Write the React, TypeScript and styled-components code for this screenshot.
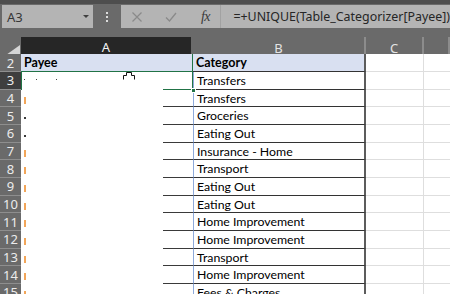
import styled, { createGlobalStyle } from 'styled-components';

const GlobalStyle = createGlobalStyle`
  html, body { margin: 0; padding: 0; background: #fff; overflow: hidden; }
  * { box-sizing: border-box; }
`;

const COLS = '21px 172px 173px 58px 1fr';
const GREEN = '#217346';
const UI_FONT = `"Noto Sans", "Liberation Sans", sans-serif`;
const CELL_FONT = `Lato, "Liberation Sans", sans-serif`;

const Window = styled.div`
  width: 450px;
  height: 294px;
  overflow: hidden;
  display: flex;
  flex-direction: column;
  background: #6a6a6a;
`;

const TopEdge = styled.div`
  flex: none;
  height: 4px;
  background: #4e4e4e;
`;

const FormulaBar = styled.div`
  flex: none;
  height: 33px;
  display: flex;
  align-items: flex-start;
  padding: 1px 0 0 2px;
`;

const NameBox = styled.div`
  width: 91px;
  height: 23px;
  background: #b4b4b4;
  display: flex;
  align-items: center;
  justify-content: space-between;
  padding: 0 4px 0 5px;
  font: 13px ${UI_FONT};
  color: #363636;
`;

const Caret = styled.span`
  width: 0;
  height: 0;
  border-left: 3px solid transparent;
  border-right: 3px solid transparent;
  border-top: 3px solid #404040;
`;

const Grip = styled.div`
  width: 29px;
  height: 23px;
  display: flex;
  flex-direction: column;
  align-items: center;
  justify-content: center;
  gap: 2px;

  span {
    width: 2px;
    height: 2px;
    background: #dcdcdc;
  }
`;

const FormulaBox = styled.div`
  flex: 1;
  height: 23px;
  background: #b4b4b4;
  display: flex;
  align-items: center;
`;

const Buttons = styled.div`
  width: 100px;
  height: 100%;
  display: flex;
  align-items: center;
  gap: 22px;
  padding-left: 10px;
  border-right: 1px solid #a2a2a2;
`;

const IconSlot = styled.span`
  width: 12px;
  height: 12px;
  display: flex;
  align-items: center;
  justify-content: center;
`;

const Fx = styled.span`
  font: italic 14px "Liberation Serif", serif;
  color: #3a3a3a;
  letter-spacing: -0.5px;
  line-height: 1;
`;

const FormulaText = styled.div`
  padding-left: 12px;
  font: 12.4px ${UI_FONT};
  color: #262626;
  white-space: nowrap;
`;

const HeaderRow = styled.div`
  flex: none;
  height: 17px;
  display: grid;
  grid-template-columns: ${COLS};
`;

const Corner = styled.div`
  display: flex;
  align-items: flex-end;
  justify-content: flex-end;
  padding: 0 1px 3px 0;
`;

const ColHead = styled.div<{ $active?: boolean }>`
  display: flex;
  align-items: center;
  justify-content: center;
  font: 13px ${UI_FONT};
  color: ${p => (p.$active ? '#f2f2f2' : '#e4e4e4')};
  background: ${p => (p.$active ? '#262626' : '#6a6a6a')};
  border-right: 2px solid ${p => (p.$active ? '#6a6a6a' : '#8c8c8c')};
  border-bottom: ${p => (p.$active ? `2px solid ${GREEN}` : '1px solid #8c8c8c')};
  padding-top: 1px;
`;

const Sheet = styled.div`
  flex: 1;
  background: #fff;
  display: flex;
  flex-direction: column;
`;

const Row = styled.div<{ $h: number }>`
  flex: none;
  height: ${p => p.$h}px;
  display: grid;
  grid-template-columns: ${COLS};
`;

const RowNum = styled.div<{ $active?: boolean }>`
  background: ${p => (p.$active ? '#3e3e3e' : '#6a6a6a')};
  color: #ececec;
  font: 13px ${UI_FONT};
  display: flex;
  align-items: center;
  justify-content: center;
  padding-top: 1px;
  border-bottom: 1px solid #8e8e8e;
  line-height: 1;
`;

const HeadCell = styled.div<{ $first?: boolean }>`
  background: #d9e0f1;
  font: bold 12.5px ${CELL_FONT};
  color: #000;
  display: flex;
  align-items: flex-end;
  padding: 0 0 1px 3px;
  border-bottom: 1px solid ${p => (p.$first ? GREEN : '#333')};
  border-right: ${p => (p.$first ? `1px solid ${GREEN}` : '2px solid #5c5c5c')};
`;

const ACell = styled.div<{ $active?: boolean }>`
  position: relative;
  background: #fff;
  padding: 7px 0 0 3px;
  box-shadow: ${p =>
    p.$active ? `inset 1px 0 0 ${GREEN}, inset -1px 0 0 ${GREEN}` : 'none'};

  &::after {
    content: '';
    position: absolute;
    right: 0;
    bottom: ${p => (p.$active ? '-1px' : '0')};
    width: 30px;
    height: ${p => (p.$active ? '2px' : '1px')};
    background: ${p => (p.$active ? GREEN : '#3a3a3a')};
  }
`;

const Smudge = styled.span<{ $kind: 'orange' | 'dot' }>`
  display: block;
  width: 2px;
  height: ${p => (p.$kind === 'orange' ? '7px' : '2px')};
  margin-top: ${p => (p.$kind === 'orange' ? '0' : '3px')};
  background: ${p => (p.$kind === 'orange' ? '#f2a65a' : '#3a3a3a')};
`;

const Specks = styled.div`
  display: flex;

  span {
    width: 1px;
    height: 1px;
    background: #444;
  }
  span:nth-child(2) { margin-left: 11px; }
  span:nth-child(3) { margin-left: 19px; }
`;

const FillHandle = styled.span`
  position: absolute;
  right: -3px;
  bottom: -3px;
  width: 5px;
  height: 5px;
  background: ${GREEN};
  border: 1px solid #fff;
  z-index: 2;
`;

const Pointer = styled.svg`
  position: absolute;
  left: 102px;
  top: 0;
  z-index: 2;
`;

const BCell = styled.div`
  background: #fff;
  font: 12.3px ${CELL_FONT};
  color: #000;
  display: flex;
  align-items: flex-end;
  padding: 0 0 1px 3px;
  border-left: 1px solid #8eaadb;
  border-bottom: 1px solid #333;
  border-right: 2px solid #5c5c5c;
  white-space: nowrap;
  overflow: hidden;
  line-height: 1.1;
`;

const GridCell = styled.div<{ $last?: boolean }>`
  background: #fff;
  border-bottom: 1px solid #dedede;
  border-right: ${p => (p.$last ? 'none' : '1px solid #dedede')};
`;

type Mark = 'orange' | 'dot' | 'specks';

const rows: { n: number; cat: string; mark: Mark }[] = [
  { n: 3, cat: 'Transfers', mark: 'specks' },
  { n: 4, cat: 'Transfers', mark: 'orange' },
  { n: 5, cat: 'Groceries', mark: 'dot' },
  { n: 6, cat: 'Eating Out', mark: 'dot' },
  { n: 7, cat: 'Insurance - Home', mark: 'orange' },
  { n: 8, cat: 'Transport', mark: 'orange' },
  { n: 9, cat: 'Eating Out', mark: 'orange' },
  { n: 10, cat: 'Eating Out', mark: 'orange' },
  { n: 11, cat: 'Home Improvement', mark: 'orange' },
  { n: 12, cat: 'Home Improvement', mark: 'orange' },
  { n: 13, cat: 'Transport', mark: 'orange' },
  { n: 14, cat: 'Home Improvement', mark: 'orange' },
  { n: 15, cat: 'Fees & Charges', mark: 'orange' },
];

const App: React.FC = () => {
  return (
    <>
      <GlobalStyle />
      <Window>
        <TopEdge />
        <FormulaBar>
          <NameBox>
            A3
            <Caret />
          </NameBox>
          <Grip>
            <span />
            <span />
            <span />
          </Grip>
          <FormulaBox>
            <Buttons>
              <IconSlot>
                <svg width="12" height="12" viewBox="0 0 12 12">
                  <path d="M1.5 1.5 L10.5 10.5 M10.5 1.5 L1.5 10.5" stroke="#8a8a8a" strokeWidth="1.2" />
                </svg>
              </IconSlot>
              <IconSlot>
                <svg width="12" height="12" viewBox="0 0 12 12">
                  <path d="M1 6.5 L4.5 10 L11 2" fill="none" stroke="#8a8a8a" strokeWidth="1.3" />
                </svg>
              </IconSlot>
              <IconSlot>
                <Fx>fx</Fx>
              </IconSlot>
            </Buttons>
            <FormulaText>=+UNIQUE(Table_Categorizer[Payee])</FormulaText>
          </FormulaBox>
        </FormulaBar>

        <HeaderRow>
          <Corner>
            <svg width="14" height="10" viewBox="0 0 14 10">
              <polygon points="14,0 14,10 0,10" fill="#d6d6d6" />
            </svg>
          </Corner>
          <ColHead $active>A</ColHead>
          <ColHead>B</ColHead>
          <ColHead>C</ColHead>
          <ColHead />
        </HeaderRow>

        <Sheet>
          <Row $h={18}>
            <RowNum>2</RowNum>
            <HeadCell $first>Payee</HeadCell>
            <HeadCell>Category</HeadCell>
            <GridCell />
            <GridCell $last />
          </Row>
          {rows.map(r => (
            <Row key={r.n} $h={17.67}>
              <RowNum $active={r.n === 3}>{r.n}</RowNum>
              <ACell $active={r.n === 3}>
                {r.mark === 'specks' && (
                  <Specks>
                    <span />
                    <span />
                    <span />
                  </Specks>
                )}
                {(r.mark === 'orange' || r.mark === 'dot') && <Smudge $kind={r.mark} />}
                {r.n === 3 && (
                  <>
                    <Pointer width="13" height="8" viewBox="0 0 13 8">
                      <path d="M0.5 7.5 V3.5 H3.5 V0.5 H8.5 V3.5 H11.5 V7.5" fill="#fff" stroke="#111" strokeWidth="1" />
                    </Pointer>
                    <FillHandle />
                  </>
                )}
              </ACell>
              <BCell>{r.cat}</BCell>
              <GridCell />
              <GridCell $last />
            </Row>
          ))}
        </Sheet>
      </Window>
    </>
  );
};

export default App;
